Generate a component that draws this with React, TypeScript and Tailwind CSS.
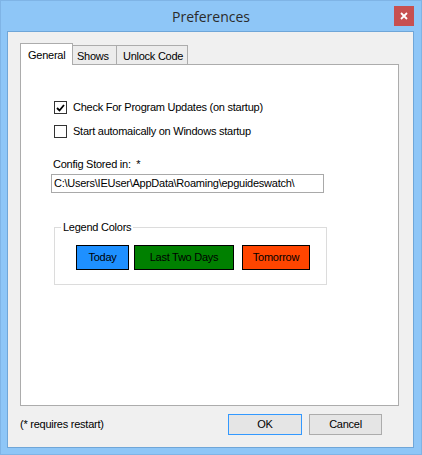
import React from 'react'

const font = "font-['Liberation_Sans',Arial,sans-serif] tracking-[-0.25px]"

function CheckRow({ checked, label }: { checked?: boolean; label: string }) {
  return (
    <div className="flex items-center h-[13px] ml-[33px]">
      <div className="w-[13px] h-[13px] border border-[#333] bg-white flex items-center justify-center">
        {checked && (
          <svg width="9" height="8" viewBox="0 0 9 8">
            <path d="M1 4 L3.5 6.5 L8 1" stroke="#000" strokeWidth="1.8" fill="none" />
          </svg>
        )}
      </div>
      <span className="ml-[6px] text-[11px] leading-[13px] text-black">{label}</span>
    </div>
  )
}

function ColorBtn({ label, bg, w }: { label: string; bg: string; w: string }) {
  return (
    <div className={`h-[25px] border border-black flex items-center justify-center text-[11px] text-black ${bg} ${w}`}>
      {label}
    </div>
  )
}

export default function App() {
  return (
    <div className={`w-[422px] h-[455px] bg-[#8ec6f7] border border-[#7fb4e6] flex flex-col ${font}`}>
      <div className="relative h-[30px] flex items-center justify-center">
        <span className="font-['Open_Sans',sans-serif] tracking-normal text-[14px] text-[#2b2b2b] mt-[1px]">Preferences</span>
        <div className="absolute right-[7px] top-[5px] w-[20px] h-[20px] bg-[#c75050] flex items-center justify-center">
          <svg width="8" height="8" viewBox="0 0 8 8">
            <path d="M1 1 L7 7 M7 1 L1 7" stroke="#fff" strokeWidth="1.8" />
          </svg>
        </div>
      </div>

      <div className="ml-[6px] mr-[7px] w-[407px] h-[417px] border border-[#6fa6d8] bg-[#f0f0f0] flex flex-col">
        <div className="ml-[12px] mt-[11px] flex items-end h-[21px]">
          <div className="relative z-10 h-[22px] -mb-[1px] w-[53px] bg-white border border-b-0 border-[#acacac] text-[11px] text-black pl-[7px] pt-[3px]">
            General
          </div>
          <div className="h-[19px] w-[44px] bg-[#ececec] border border-b-0 border-l-0 border-[#acacac] text-[11px] text-black pl-[4px] pt-[2px]">
            Shows
          </div>
          <div className="h-[19px] w-[71px] bg-[#ececec] border border-b-0 border-l-0 border-[#acacac] text-[11px] text-black pl-[6px] pt-[2px]">
            Unlock Code
          </div>
        </div>

        <div className="ml-[12px] w-[379px] h-[342px] border border-[#acacac] bg-white flex flex-col">
          <div className="mt-[36px]">
            <CheckRow checked label="Check For Program Updates (on startup)" />
          </div>
          <div className="mt-[11px]">
            <CheckRow label="Start automaically on Windows startup" />
          </div>
          <div className="mt-[20px] ml-[32px] h-[13px] text-[11px] leading-[13px] text-black">
            Config Stored in:&nbsp;&nbsp;*
          </div>
          <div className="mt-[3px] ml-[30px] w-[273px] h-[19px] border border-[#a9a9a9] text-[11px] text-black pl-[2px] flex items-center">
            C:\Users\IEUser\AppData\Roaming\epguideswatch\
          </div>

          <div className="relative mt-[34px] ml-[33px] w-[273px] h-[58px] border border-[#dcdcdc]">
            <span className="absolute left-[6px] -top-[7px] bg-white px-[2px] text-[11px] leading-[13px] text-black">
              Legend Colors
            </span>
            <div className="mt-[17px] ml-[21px] flex">
              <ColorBtn label="Today" bg="bg-[#1e90ff]" w="w-[53px]" />
              <div className="w-[5px]" />
              <ColorBtn label="Last Two Days" bg="bg-[#008000]" w="w-[100px]" />
              <div className="w-[8px]" />
              <ColorBtn label="Tomorrow" bg="bg-[#ff4500]" w="w-[68px]" />
            </div>
          </div>
        </div>

        <div className="mt-[8px] flex items-center h-[21px]">
          <span className="ml-[12px] text-[11px] text-black">(* requires restart)</span>
          <div className="ml-auto flex">
            <div className="w-[74px] h-[21px] border border-[#3399ff] bg-[#e5e5e5] flex items-center justify-center text-[11px] text-black">
              OK
            </div>
            <div className="ml-[7px] w-[73px] h-[21px] border border-[#acacac] bg-[#e5e5e5] flex items-center justify-center text-[11px] text-black">
              Cancel
            </div>
          </div>
          <div className="w-[31px]" />
        </div>
      </div>
    </div>
  )
}
